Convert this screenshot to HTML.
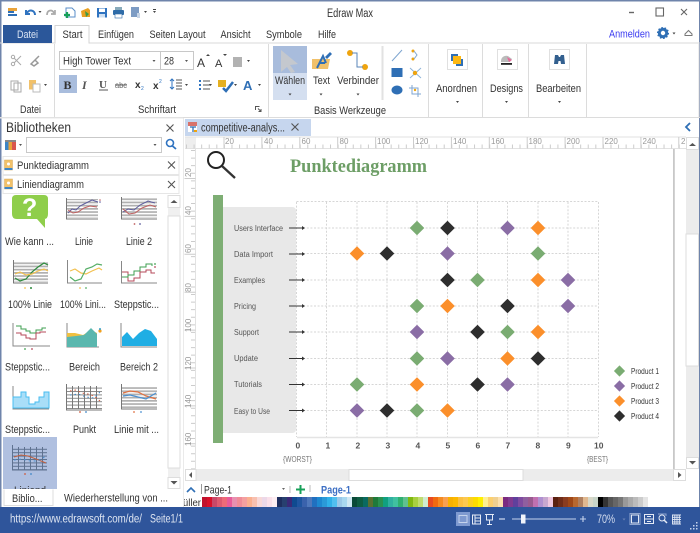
<!DOCTYPE html>
<html><head><meta charset="utf-8"><style>
html,body{margin:0;padding:0;background:#fff}
#w{position:relative;width:700px;height:533px;overflow:hidden;background:#fff}
svg{position:absolute;left:0;top:0}
text{font-family:"Liberation Sans",sans-serif;font-size:11px;fill:#333}
#pal{position:absolute;left:202px;top:497px;width:447px;height:10px;display:flex}
#pal i{flex:1;display:block}
</style></head><body><div id="w">
<svg width="700" height="533" viewBox="0 0 700 533">
<defs>
<path id="d" d="M0-7.3 7.3 0 0 7.3-7.3 0Z"/>
<path id="l" d="M0-5.6 5.6 0 0 5.6-5.6 0Z"/>
<pattern id="st" width="4" height="3.2" patternUnits="userSpaceOnUse"><rect width="4" height="1.7" fill="#b0b0b0"/></pattern>
<pattern id="gr" width="6" height="3.4" patternUnits="userSpaceOnUse"><rect width="6" height="1" fill="#8a8a8a"/><rect width="1" height="3.4" fill="#777"/></pattern>
<pattern id="gs" width="6" height="3.4" patternUnits="userSpaceOnUse"><rect width="6" height="1" fill="#5f7290"/><rect width="1" height="3.4" fill="#5f7290"/></pattern>
<path id="arr" d="M0 0 3 0 1.5 2Z"/>
<path id="x" d="M-3.5-3.5 3.5 3.5M3.5-3.5-3.5 3.5" stroke="#555" stroke-width="1.1" fill="none"/>
</defs>

<!-- window frame -->
<rect x=".5" y=".5" width="699" height="532" fill="#fff" stroke="#6f84ab"/>
<rect x="0" y="0" width="700" height="1.5" fill="#6f84ab"/>
<rect x="0" y="0" width="1.5" height="533" fill="#6f84ab"/>

<!-- quick access icons -->
<g>
<rect x="8" y="8" width="9" height="3" fill="#e9a33a"/><rect x="8" y="11" width="6" height="2" fill="#2f6fb5"/><rect x="8" y="14" width="9" height="2" fill="#2f6fb5"/>
<path d="M26 10v4h4M27 13c2-4 8-3 8 2" fill="none" stroke="#2f73c0" stroke-width="2"/>
<use href="#arr" x="38.5" y="11" fill="#444"/>
<path d="M55 10v4h-4M54 13c-2-4-7-3-7 2" fill="none" stroke="#aaa" stroke-width="1.7"/>
<path d="M66 8h6l3 3v6H66Z" fill="#fff" stroke="#5a8ec8"/><path d="M67 12v6M64 15h6" stroke="#17a05a" stroke-width="2.2"/>
<path d="M81 11l7-3 2 2 0 7-8 0Z" fill="#e9a020"/><path d="M85 11l4 3-3 3Z" fill="#3d9a46"/>
<rect x="97" y="8" width="10" height="9.5" fill="#2f73c0"/><rect x="99" y="8.5" width="6" height="3.5" fill="#fff"/><rect x="99" y="14" width="6" height="3.5" fill="#cfe0f2"/>
<rect x="115" y="7" width="7" height="3" fill="#8ab"/><rect x="113" y="10" width="11" height="5" rx="1" fill="#2f6ca8"/><rect x="115" y="14" width="7" height="4" fill="#fff" stroke="#2f6ca8" stroke-width=".6"/>
<rect x="131" y="7" width="8" height="10" fill="#7d9cc4"/><rect x="137" y="13" width="3" height="5" fill="#c6d4e6"/>
<use href="#arr" x="144" y="11" fill="#444"/>
<rect x="153" y="9" width="3" height="1" fill="#444"/><use href="#arr" x="153" y="11" fill="#444"/>
</g>
<text x="327" y="17" textLength="46" lengthAdjust="spacingAndGlyphs" style="font-size:11.5px">Edraw Max</text>
<path d="M629 12.5h5" stroke="#666" stroke-width="1.4"/>
<rect x="656" y="8" width="7.5" height="8" fill="none" stroke="#666" stroke-width="1.1"/>
<path d="M681 9 687 15M687 9 681 15" stroke="#666" stroke-width="1.1"/>

<!-- tabs -->
<path d="M0 43H700" stroke="#d8d8d8"/>
<rect x="3" y="25" width="49" height="18" fill="#2b579a"/>
<text x="17" y="38" textLength="21" lengthAdjust="spacingAndGlyphs" style="fill:#dbe5f4">Datei</text>
<path d="M55 43.5V25.5H89V43.5" fill="#fff" stroke="#d4d4d4"/><rect x="56" y="42" width="32" height="3" fill="#fff"/>
<text x="62.5" y="38" textLength="20" lengthAdjust="spacingAndGlyphs">Start</text>
<text x="98" y="38" textLength="36" lengthAdjust="spacingAndGlyphs">Einfügen</text>
<text x="149.5" y="38" textLength="56" lengthAdjust="spacingAndGlyphs">Seiten Layout</text>
<text x="220.5" y="38" textLength="30" lengthAdjust="spacingAndGlyphs">Ansicht</text>
<text x="266" y="38" textLength="36" lengthAdjust="spacingAndGlyphs">Symbole</text>
<text x="318" y="38" textLength="18" lengthAdjust="spacingAndGlyphs">Hilfe</text>
<text x="609" y="37.5" textLength="41" lengthAdjust="spacingAndGlyphs" style="fill:#3a3af0">Anmelden</text>
<circle cx="663" cy="33" r="3.7" fill="none" stroke="#2f6fb5" stroke-width="3"/>
<circle cx="663" cy="33" r="5.3" fill="none" stroke="#2f6fb5" stroke-width="1.5" stroke-dasharray="1.6 1.7"/>
<use href="#arr" x="672.5" y="32.5" fill="#444"/>
<path d="M685 34l3.5-3.5 3.5 3.500v1.500h-7Z" fill="none" stroke="#777" stroke-width="1"/>

<!-- ribbon -->
<path d="M0 117.5H700M54.5 44V117M268.5 44V117M428.5 44V117M482.5 44V117M528.500 44V117M586.5 44V117M699 44V117" stroke="#dcdcdc" fill="none"/>
<path d="M382.5 46V100" stroke="#e2e2e2" stroke-width="2"/>
<!-- clipboard -->
<g stroke="#aaa" fill="none" stroke-width="1">
<circle cx="13" cy="57" r="1.7"/><circle cx="13" cy="64" r="1.7"/><path d="M14 58 21 65M14 63 21 56"/>
<path d="M31 64 35 60 38 63 34 66ZM35 60 39 56" stroke="#999" stroke-width="1.5"/>
<rect x="11" y="81" width="7" height="9"/><rect x="14" y="83" width="7" height="9"/>
</g>
<rect x="29" y="80" width="7" height="9.5" fill="#f1c16a"/><rect x="33" y="84" width="7" height="8" fill="#fff" stroke="#bbb"/>
<use href="#arr" x="44" y="84" fill="#444"/>
<text x="20" y="113" textLength="21" lengthAdjust="spacingAndGlyphs">Datei</text>
<!-- font -->
<rect x="59.5" y="51.5" width="134" height="18" fill="#fff" stroke="#c8c8c8"/><path d="M160.5 51V70" stroke="#c8c8c8"/>
<text x="63" y="64.5" textLength="68" lengthAdjust="spacingAndGlyphs">High Tower Text</text>
<use href="#arr" x="152.5" y="60" fill="#555"/>
<text x="164" y="64.5" textLength="10" lengthAdjust="spacingAndGlyphs">28</text>
<use href="#arr" x="185" y="60" fill="#555"/>
<text x="197" y="67" style="font-size:12px">A</text><path d="M206 56l2-2 2 2Z" fill="#444"/>
<text x="215" y="67" style="font-size:11px">A</text><path d="M223 54h4l-2 2Z" fill="#444"/>
<path d="M233 58h9M233 60h9M233 62h9M233 64h9M233 66h9" stroke="#666"/><use href="#arr" x="247" y="60" fill="#444"/>
<rect x="59" y="75" width="18" height="18" fill="#a9bddd"/>
<text x="63.5" y="89" style="font-family:'Liberation Serif',serif;font-weight:bold;font-size:12px;fill:#333">B</text>
<text x="82" y="89" style="font-family:'Liberation Serif',serif;font-style:italic;font-weight:bold;font-size:12px;fill:#555">I</text>
<text x="99" y="88" style="font-family:'Liberation Serif',serif;font-weight:bold;font-size:11px;fill:#555">U</text><path d="M99 90h9" stroke="#555"/>
<text x="115" y="88" style="font-size:8.5px;fill:#666" textLength="12" lengthAdjust="spacingAndGlyphs">abc</text><path d="M115 85h12" stroke="#666"/>
<text x="135" y="88" style="font-weight:bold;font-size:10px">x</text><text x="141" y="90" style="font-size:5px;fill:#2f73c0">2</text>
<text x="153" y="89" style="font-weight:bold;font-size:10px">x</text><text x="159" y="83" style="font-size:5px;fill:#2f73c0">2</text>
<path d="M172 79v10M170 81l2-2 2 2M170 87l2 2 2-2" stroke="#2f73c0" fill="none"/><path d="M176 80h6M176 83h6M176 86h6M176 89h6" stroke="#555"/><use href="#arr" x="185" y="84" fill="#444"/>
<path d="M199 81h2M199 85h2M199 89h2" stroke="#2f73c0" stroke-width="2"/><path d="M203 81h7M203 85h7M203 89h7" stroke="#555"/><use href="#arr" x="209" y="84" fill="#444"/>
<rect x="218" y="80" width="8" height="7" fill="#e5b021"/><path d="M223 88l3 3 7-9" stroke="#2f6fb5" stroke-width="2.5" fill="none"/><use href="#arr" x="234" y="84" fill="#444"/>
<text x="243" y="90" style="font-size:13px;font-weight:bold;fill:#2f6fb5">A</text><use href="#arr" x="258" y="84" fill="#444"/>
<text x="138" y="113" textLength="38" lengthAdjust="spacingAndGlyphs">Schriftart</text>
<path d="M255.5 106.5h4M255.5 106v4M258 108.5l3 3M261 109v2.5h-2.5" stroke="#555" fill="none"/>
<!-- basis tools -->
<rect x="273" y="46" width="34" height="27" fill="#a8bcdc"/><rect x="273" y="73" width="34" height="27" fill="#d4dff0"/>
<path d="M281 50 298 64 290 65 295 72 291 73 287 67 281 72Z" fill="#c4c8ce"/>
<text x="275" y="84" textLength="30" lengthAdjust="spacingAndGlyphs">Wählen</text><use href="#arr" x="288.5" y="93.5" fill="#444"/>
<path d="M312 59h18l-2 10h-16Z" fill="#f1c16a"/><path d="M317 68l6-12 3 7M319 63h6" fill="none" stroke="#2f6fb5" stroke-width="2"/><path d="M325 57l5-5 2 2-5 5Z" fill="#2f6fb5"/>
<text x="313" y="84" textLength="17" lengthAdjust="spacingAndGlyphs">Text</text><use href="#arr" x="319.5" y="93.5" fill="#444"/>
<circle cx="350" cy="53" r="3" fill="#efa40e"/><circle cx="365" cy="67" r="3" fill="#efa40e"/><path d="M352 53h5v14h6" fill="none" stroke="#5a86b8" stroke-width="1"/>
<text x="337" y="84" textLength="42" lengthAdjust="spacingAndGlyphs">Verbinder</text><use href="#arr" x="356.5" y="93.5" fill="#444"/>
<text x="314" y="114" textLength="72" lengthAdjust="spacingAndGlyphs">Basis Werkzeuge</text>
<path d="M392 61 402 50" stroke="#7fa6d0"/>
<circle cx="413" cy="51" r="1.5" fill="#efa40e"/><circle cx="413" cy="59" r="1.5" fill="#efa40e"/><path d="M414 51 417 55 414 59" stroke="#7fa6d0" fill="none"/>
<rect x="391.5" y="68" width="11" height="9" fill="#2f6fb5"/>
<path d="M410 68 421 78M421 68 410 78" stroke="#8fb4d8"/><circle cx="415" cy="73" r="2.2" fill="#efa40e"/>
<ellipse cx="397" cy="90" rx="5.5" ry="4.5" fill="#2f6fb5"/>
<path d="M412 85v9h9M409 88h9v9" fill="none" stroke="#7fa6d0"/><circle cx="415" cy="90" r="1.2" fill="#efa40e"/>
<!-- right groups -->
<rect x="447.5" y="49.5" width="20" height="20" fill="#fff" stroke="#e0e0e0"/>
<rect x="451" y="54" width="7" height="7" fill="#2f6fb5"/><rect x="456" y="59" width="7" height="7" fill="#2f6fb5"/><rect x="453" y="56" width="8" height="8" fill="#fdb813"/>
<text x="436" y="92" textLength="41" lengthAdjust="spacingAndGlyphs">Anordnen</text><use href="#arr" x="456" y="101" fill="#444"/>
<rect x="497.5" y="49.5" width="20" height="20" fill="#fff" stroke="#e0e0e0"/>
<path d="M501 61c0-4 4-6 7-5l4 3-2 3h-9Z" fill="#bbb"/><path d="M507 57l5 3-3 2Z" fill="#e9679a"/><rect x="501" y="63" width="11" height="1.8" fill="#222"/>
<text x="490" y="92" textLength="33" lengthAdjust="spacingAndGlyphs">Designs</text><use href="#arr" x="505" y="101" fill="#444"/>
<rect x="549.5" y="49.5" width="20" height="20" fill="#fff" stroke="#e0e0e0"/>
<path d="M554 64l1-9h3l1 2h1l1-2h3l1 9h-4l-.5-3h-2l-.5 3Z" fill="#33608f"/>
<text x="536" y="92" textLength="45" lengthAdjust="spacingAndGlyphs">Bearbeiten</text><use href="#arr" x="558" y="101" fill="#444"/>

<!-- document tab bar -->
<rect x="185" y="119" width="126" height="17" fill="#c6d6ee"/>
<rect x="188" y="122" width="9" height="4" fill="#d9726a"/><rect x="188" y="126" width="9" height="6" fill="#fff"/><path d="M190 127h6M193 127v5" stroke="#2f6fb5" stroke-width="1.3"/><rect x="194" y="130" width="3" height="2" fill="#efa40e"/>
<text x="201" y="131.5" textLength="84" lengthAdjust="spacingAndGlyphs" style="font-size:11.5px">competitive-analys...</text>
<use href="#x" x="295" y="127"/>
<path d="M690 123 686 127 690 131" fill="none" stroke="#2f6fb5" stroke-width="1.8"/>

<!-- top ruler -->
<rect x="185" y="137" width="11" height="12" fill="#eee"/>
<path d="M185 137H686M185 148.5H686" stroke="#e2e2e2"/>
<path d="M186 146.5H685" stroke="#ccc" stroke-width="4" stroke-dasharray="1 6.58"/>
<path d="M223.5 142.5H685" stroke="#ccc" stroke-width="11" stroke-dasharray="1 36.9"/>
<text x="225" y="144" style="font-size:8px;fill:#999">20</text><text x="264" y="144" style="font-size:8px;fill:#999">40</text><text x="301.500" y="144" style="font-size:8px;fill:#999">60</text><text x="339.500" y="144" style="font-size:8px;fill:#999">80</text><text x="377" y="144" style="font-size:8px;fill:#999">100</text><text x="415" y="144" style="font-size:8px;fill:#999">120</text><text x="453" y="144" style="font-size:8px;fill:#999">140</text><text x="491" y="144" style="font-size:8px;fill:#999">160</text><text x="528.500" y="144" style="font-size:8px;fill:#999">180</text><text x="566.500" y="144" style="font-size:8px;fill:#999">200</text><text x="604.500" y="144" style="font-size:8px;fill:#999">220</text><text x="642.500" y="144" style="font-size:8px;fill:#999">240</text><text x="681" y="144" style="font-size:8px;fill:#999">2</text>

<!-- left ruler -->
<path d="M195.5 149V469" stroke="#e2e2e2"/>
<path d="M193 150V469" stroke="#ccc" stroke-width="4" stroke-dasharray="1 6.58"/>
<path d="M190 178V469" stroke="#ccc" stroke-width="11" stroke-dasharray="1 36.9"/>
<text transform="translate(191 177) rotate(-90)" style="font-size:8px;fill:#999">20</text>
<text transform="translate(191 215) rotate(-90)" style="font-size:8px;fill:#999">40</text>
<text transform="translate(191 253) rotate(-90)" style="font-size:8px;fill:#999">60</text>
<text transform="translate(191 292) rotate(-90)" style="font-size:8px;fill:#999">80</text>
<text transform="translate(191 332) rotate(-90)" style="font-size:8px;fill:#999">100</text>
<text transform="translate(191 370) rotate(-90)" style="font-size:8px;fill:#999">120</text>
<text transform="translate(191 408) rotate(-90)" style="font-size:8px;fill:#999">140</text>
<text transform="translate(191 446) rotate(-90)" style="font-size:8px;fill:#999">160</text>

<!-- page edge -->
<rect x="673" y="149" width="1.8" height="320" fill="#c8c8c8"/>

<!-- canvas content -->
<circle cx="216" cy="160" r="8" fill="none" stroke="#222" stroke-width="2"/>
<path d="M222 166 235 178" stroke="#333" stroke-width="2.3"/>
<text x="290" y="172" textLength="137" lengthAdjust="spacingAndGlyphs" style="font-family:'Liberation Serif',serif;font-weight:bold;font-size:19px;fill:#6d9e66">Punktediagramm</text>
<rect x="213" y="195" width="10" height="248" fill="#7eae74"/>
<path d="M223 207H292q4 0 4 4V429q0 4-4 4H223Z" fill="#e8e8e8"/>
<text x="234" y="231" textLength="49" lengthAdjust="spacingAndGlyphs" style="font-size:8px;fill:#555">Users Interface</text>
<text x="234" y="257" textLength="39" lengthAdjust="spacingAndGlyphs" style="font-size:8px;fill:#555">Data Import</text>
<text x="234" y="283" textLength="31" lengthAdjust="spacingAndGlyphs" style="font-size:8px;fill:#555">Examples</text>
<text x="234" y="309" textLength="22" lengthAdjust="spacingAndGlyphs" style="font-size:8px;fill:#555">Pricing</text>
<text x="234" y="335" textLength="25" lengthAdjust="spacingAndGlyphs" style="font-size:8px;fill:#555">Support</text>
<text x="234" y="361" textLength="24" lengthAdjust="spacingAndGlyphs" style="font-size:8px;fill:#555">Update</text>
<text x="234" y="387" textLength="28" lengthAdjust="spacingAndGlyphs" style="font-size:8px;fill:#555">Tutorials</text>
<text x="234" y="414" textLength="36" lengthAdjust="spacingAndGlyphs" style="font-size:8px;fill:#555">Easy to Use</text>
<!-- grid -->
<g stroke="#d6d6d6" stroke-dasharray="2 1.6" fill="none">
<path d="M296.5 201.5H598.5M296 228H598M296 253.5H598M296 280H598M296 306H598M296 332H598M296 358.5H598M296 384.5H598M296 410.5H598"/>
<path d="M326.500 202V437M357 202V437M387 202V437M417 202V437M447.5 202V437M477.5 202V437M507.5 202V437M538 202V437M568 202V437M598.5 202V437M296.5 202V437"/>
</g>
<path d="M297 437.5H598" stroke="#e4e4e4" stroke-width="1.5"/>
<!-- arrows -->
<path d="M289 228H303M289 254H303M289 280H303M289 306H303M289 332H303M289 358.5H303M289 384.5H303M289 410.5H303" stroke="#333" stroke-width="1"/>
<path fill="#333" d="M302 226 305 228 302 230ZM302 252 305 254 302 256ZM302 278 305 280 302 282ZM302 304 305 306 302 308ZM302 330 305 332 302 334ZM302 356.5 305 358.5 302 360.5ZM302 382.5 305 384.5 302 386.5ZM302 408.5 305 410.5 302 412.5Z"/>
<!-- diamonds -->
<g fill="#7aac72">
<use href="#d" x="417" y="228"/><use href="#d" x="538" y="253.5"/><use href="#d" x="477.5" y="280"/><use href="#d" x="417" y="306"/><use href="#d" x="507.5" y="332"/><use href="#d" x="417" y="358.5"/><use href="#d" x="357" y="384.5"/><use href="#d" x="417" y="410.5"/>
<use href="#l" x="619.5" y="371"/>
</g>
<g fill="#8a6da5">
<use href="#d" x="507.5" y="228"/><use href="#d" x="447.5" y="253.5"/><use href="#d" x="568" y="280"/><use href="#d" x="568" y="306"/><use href="#d" x="417" y="332"/><use href="#d" x="447.5" y="358.5"/><use href="#d" x="507.5" y="384.5"/><use href="#d" x="357" y="410.5"/>
<use href="#l" x="619.5" y="386"/>
</g>
<g fill="#fb8f2b">
<use href="#d" x="538" y="228"/><use href="#d" x="357" y="253.5"/><use href="#d" x="538" y="280"/><use href="#d" x="447.5" y="306"/><use href="#d" x="538" y="332"/><use href="#d" x="507.5" y="358.5"/><use href="#d" x="417" y="384.5"/><use href="#d" x="447.5" y="410.5"/>
<use href="#l" x="619.5" y="401"/>
</g>
<g fill="#2e2e2e">
<use href="#d" x="447.5" y="228"/><use href="#d" x="387" y="253.5"/><use href="#d" x="447.5" y="280"/><use href="#d" x="507.5" y="306"/><use href="#d" x="477.5" y="332"/><use href="#d" x="538" y="358.5"/><use href="#d" x="477.5" y="384.5"/><use href="#d" x="387" y="410.5"/>
<use href="#l" x="619.5" y="416"/>
</g>
<text x="631" y="374" textLength="28" lengthAdjust="spacingAndGlyphs" style="font-size:8px">Product 1</text>
<text x="631" y="389" textLength="28" lengthAdjust="spacingAndGlyphs" style="font-size:8px">Product 2</text>
<text x="631" y="404" textLength="28" lengthAdjust="spacingAndGlyphs" style="font-size:8px">Product 3</text>
<text x="631" y="419" textLength="28" lengthAdjust="spacingAndGlyphs" style="font-size:8px">Product 4</text>
<!-- axis -->
<text x="295.5" y="448.5" style="font-size:8.5px;font-weight:bold;fill:#555">0</text>
<text x="325.5" y="448.5" style="font-size:8.5px;font-weight:bold;fill:#555">1</text>
<text x="355.5" y="448.5" style="font-size:8.5px;font-weight:bold;fill:#555">2</text>
<text x="385.5" y="448.5" style="font-size:8.5px;font-weight:bold;fill:#555">3</text>
<text x="415.5" y="448.5" style="font-size:8.5px;font-weight:bold;fill:#555">4</text>
<text x="445.5" y="448.5" style="font-size:8.5px;font-weight:bold;fill:#555">5</text>
<text x="475.5" y="448.5" style="font-size:8.5px;font-weight:bold;fill:#555">6</text>
<text x="505.5" y="448.5" style="font-size:8.5px;font-weight:bold;fill:#555">7</text>
<text x="535.5" y="448.5" style="font-size:8.5px;font-weight:bold;fill:#555">8</text>
<text x="566" y="448.5" style="font-size:8.5px;font-weight:bold;fill:#555">9</text>
<text x="594" y="448.5" style="font-size:8.5px;font-weight:bold;fill:#555">10</text>
<text x="283" y="462" textLength="29" lengthAdjust="spacingAndGlyphs" style="font-size:8px;fill:#777">{WORST}</text>
<text x="587" y="462" textLength="21" lengthAdjust="spacingAndGlyphs" style="font-size:8px;fill:#777">{BEST}</text>

<!-- right scrollbar -->
<rect x="686" y="137" width="13" height="332" fill="#ececec"/>
<rect x="686.5" y="137.5" width="12" height="12" fill="#fff" stroke="#ddd"/><path d="M689 146l3.5-3 3.5 3Z" fill="#555"/>
<rect x="686" y="234" width="12.5" height="132" fill="#fff" stroke="#ddd"/>
<rect x="686.5" y="457.5" width="12" height="11" fill="#fff" stroke="#ddd"/><path d="M689 461h7l-3.5 3.5Z" fill="#555"/>
<!-- bottom scrollbar -->
<rect x="185" y="469" width="501" height="12" fill="#ececec"/>
<rect x="185.5" y="469.5" width="10.5" height="11" fill="#fff" stroke="#ddd"/><path d="M192 472v6l-3-3Z" fill="#555"/>
<rect x="349" y="469.5" width="174" height="11" fill="#fff" stroke="#ddd"/>
<rect x="673.5" y="469.5" width="12" height="11" fill="#fff" stroke="#ddd"/><path d="M678 472v6l3.5-3Z" fill="#555"/>

<!-- page row -->
<path d="M187 492 191 488 195 492" fill="none" stroke="#2f6fb5" stroke-width="1.6"/>
<path d="M201.5 484V494" stroke="#999"/>
<text x="204" y="493.5" textLength="28" lengthAdjust="spacingAndGlyphs" style="font-size:11px">Page-1</text>
<use href="#arr" x="282" y="488" fill="#666"/>
<path d="M290 486V493M310 485V492" stroke="#bbb"/>
<path d="M296 489.5H305M300.5 485V494" stroke="#18a05a" stroke-width="2"/>
<text x="321" y="493.5" textLength="30" lengthAdjust="spacingAndGlyphs" style="font-size:11px;font-weight:bold;fill:#3d6fc4">Page-1</text>
<text x="177" y="506" textLength="24" lengthAdjust="spacingAndGlyphs" style="font-size:10.5px">Füller</text>

<!-- left panel -->
<rect x="1.5" y="118" width="181" height="389" fill="#fff"/>
<path d="M0 118H183" stroke="#e8e8e8"/>
<path d="M183.5 118V507" stroke="#eaeaea"/>
<text x="6" y="132" textLength="65" lengthAdjust="spacingAndGlyphs" style="font-size:13.5px">Bibliotheken</text>
<use href="#x" x="170" y="128"/>
<rect x="5" y="141" width="11" height="9" fill="#e9a33a"/><rect x="5" y="141" width="3.5" height="9" fill="#3d85c6"/><rect x="12" y="141" width="4" height="9" fill="#d9564e"/><rect x="5" y="140" width="11" height="2" fill="#888"/>
<use href="#arr" x="19" y="144" fill="#555"/>
<rect x="26.5" y="137.5" width="135" height="15" fill="#fff" stroke="#c9c9c9"/>
<use href="#arr" x="153.5" y="144" fill="#555"/>
<circle cx="170" cy="143" r="3.5" fill="none" stroke="#2f73c0" stroke-width="1.6"/><path d="M172.5 146 176 149" stroke="#2f73c0" stroke-width="1.8"/>
<rect x="3" y="156.5" width="176" height="18" fill="#fff" stroke="#e6e6e6"/>
<rect x="3" y="175.5" width="176" height="18" fill="#fff" stroke="#e6e6e6"/>
<rect x="4.5" y="160" width="8" height="10" fill="#f1c16a" stroke="#d7a95a" stroke-width=".5"/><rect x="4.5" y="168" width="8" height="2" fill="#3d85c6"/><circle cx="8.500" cy="164" r="1.5" fill="#fff"/>
<rect x="4.5" y="179" width="8" height="10" fill="#f1c16a" stroke="#d7a95a" stroke-width=".5"/><rect x="4.5" y="187" width="8" height="2" fill="#3d85c6"/><circle cx="8.500" cy="183" r="1.5" fill="#fff"/>
<text x="17" y="169" textLength="72" lengthAdjust="spacingAndGlyphs">Punktediagramm</text>
<text x="17" y="188" textLength="67" lengthAdjust="spacingAndGlyphs">Liniendiagramm</text>
<use href="#x" x="171.5" y="165"/><use href="#x" x="171.5" y="184.5"/>

<!-- library scrollbar -->
<rect x="168" y="195" width="12" height="294" fill="#f0f0f0"/>
<rect x="168" y="195.5" width="12" height="12" fill="#fff" stroke="#ddd"/><path d="M170.5 203l3.5-3 3.5 3Z" fill="#555"/>
<rect x="168" y="216" width="12" height="252" fill="#fff" stroke="#ddd"/>
<rect x="168" y="477.5" width="12" height="11" fill="#fff" stroke="#ddd"/><path d="M170.5 481h7l-3.5 3.5Z" fill="#555"/>

<!-- thumbnails -->
<path d="M16 195H44Q48 195 48 199V214Q48 219 44 219H45V228L37 219H17Q12 219 12 214V199Q12 195 16 195Z" fill="#8fce4b"/>
<text x="22" y="216" style="font-size:25px;font-weight:bold;fill:#fff">?</text>

<g>
<rect x="67" y="199" width="31" height="19" fill="url(#st)"/><path d="M66.5 198V219H98" fill="none" stroke="#777"/>
<path d="M68 213 72 209 76 210 80 206 86 203 92 200 98 202" fill="none" stroke="#5c5c9c"/><path d="M68 210 73 213 78 212 84 208 90 206 97 207" fill="none" stroke="#c06060"/>
<circle cx="100" cy="200" r=".8" fill="#c06060"/><circle cx="100" cy="202" r=".8" fill="#5c5c9c"/>
</g>
<g>
<rect x="122" y="198" width="35" height="20" fill="url(#st)"/><path d="M121.5 197V219H157" fill="none" stroke="#777"/>
<path d="M123 212 128 209 134 210 140 205 148 201 155 203" fill="none" stroke="#5c5c9c"/><path d="M123 209 129 214 135 213 142 208 150 205 156 207" fill="none" stroke="#c06060"/>
<circle cx="134.5" cy="224" r=".9" fill="#c06060"/><circle cx="140" cy="224" r=".9" fill="#5c5c9c"/>
</g>
<g>
<rect x="14" y="261" width="34" height="21" fill="url(#st)"/><path d="M13.5 260V283H48" fill="none" stroke="#777"/>
<path d="M15 278 20 281 26 279 32 272 38 267 44 263 48 265" fill="none" stroke="#2c8a3c" stroke-width="1.2"/><path d="M15 274 20 272 26 275 32 274 38 271 44 269 48 271" fill="none" stroke="#f2c04f" stroke-width="1.2"/>
<circle cx="25" cy="288" r=".9" fill="#f2c04f"/><circle cx="31" cy="288" r="1" fill="#2c8a3c"/>
</g>
<g>
<path d="M67.5 260V283H102" fill="none" stroke="#888"/>
<path d="M70 271 75 269 81 273 86 274 92 271 99 268 102 270" fill="none" stroke="#f2c04f" stroke-width="1.2"/><path d="M70 277 75 281 81 279 86 269 92 267 97 264 102 265" fill="none" stroke="#55ae66" stroke-width="1.2"/>
<circle cx="80" cy="288" r=".9" fill="#f2c04f"/><circle cx="86" cy="288" r=".9" fill="#55ae66"/>
</g>
<g>
<path d="M121.5 261V283H157" fill="none" stroke="#888"/>
<path d="M122 272H128V281H134V278H140V272H146V270H151V273H155" fill="none" stroke="#b5485a"/><path d="M122 277H128V275H134V271H140V267H146V264H152V266" fill="none" stroke="#3f9f50"/>
<circle cx="155" cy="264" r=".9" fill="#3f9f50"/><circle cx="155" cy="267" r=".9" fill="#b5485a"/>
</g>
<g>
<path d="M13 323V346H50" fill="none" stroke="#888"/>
<path d="M16 326H21V329H26V331H30V333H36V330H42V328H46" fill="none" stroke="#3f9f50"/><path d="M16 333H21V335H26V338H30V339H36V333H40V332H46" fill="none" stroke="#b5485a"/>
<circle cx="25" cy="349" r=".9" fill="#3f9f50"/><circle cx="32" cy="349" r=".9" fill="#b5485a"/>
</g>
<g>
<path d="M67 323V347H99" fill="none" stroke="#888"/>
<path d="M67 333 75 333 83 335 91 330 97 333V347H67Z" fill="#f0c040"/><path d="M67 337 76 336 84 335 91 328 97 334V347H67Z" fill="#5ab7ae"/>
<circle cx="100" cy="331" r="1.6" fill="#f0a020"/><circle cx="100" cy="329" r="1" fill="#30a0d0"/>
</g>
<g>
<path d="M121 323V347H157" fill="none" stroke="#888"/>
<path d="M122 346V337L127 332 133 339 139 333 145 329 151 331 157 339V346Z" fill="#20aee4"/>
</g>
<g>
<path d="M13 386V409H49" fill="none" stroke="#888"/>
<path d="M13 408V397H21V392H26V397H29V404H35V402H39V397H44V392H49V408Z" fill="#a9def8" stroke="#49bdf0"/>
</g>
<g>
<rect x="67" y="386" width="35" height="23" fill="url(#gr)"/><path d="M66.5 384V410H102" fill="none" stroke="#777"/>
<path d="M70 391 76 390 82 393 88 394 94 396 100 401" fill="none" stroke="#d0583a" stroke-dasharray="1.5 3"/><path d="M70 395 78 394 86 397 94 398 100 392" fill="none" stroke="#3d85c6" stroke-dasharray="1.5 3"/>
<circle cx="80" cy="412" r=".9" fill="#d0583a"/><circle cx="86" cy="412" r=".9" fill="#3d85c6"/>
</g>
<g>
<rect x="122" y="386" width="35" height="22" fill="url(#st)"/><path d="M121.5 384V409H157" fill="none" stroke="#777"/>
<path d="M123 393 130 391 138 392 146 396 156 399" fill="none" stroke="#e07040" stroke-width="1.2"/><path d="M123 396 130 395 138 397 146 399 156 393" fill="none" stroke="#4a8fd0" stroke-width="1.2"/>
<circle cx="134" cy="412" r=".9" fill="#e07040"/><circle cx="141" cy="412" r=".9" fill="#4a8fd0"/>
</g>

<!-- selected -->
<rect x="3" y="437" width="54" height="52" fill="#b0c0e0"/>
<rect x="13" y="447" width="34" height="23" fill="url(#gs)"/><path d="M12.5 445V470H47" fill="none" stroke="#5f7290"/>
<path d="M14 457 21 455 28 456 36 459 46 463" fill="none" stroke="#c0603f"/><path d="M14 460 22 459 30 461 38 461 46 456" fill="none" stroke="#4a8fd0" stroke-dasharray="2 3"/>
<circle cx="25" cy="474" r=".9" fill="#d0583a"/><circle cx="31" cy="474" r=".9" fill="#3d85c6"/>
<text x="14" y="494" textLength="32" lengthAdjust="spacingAndGlyphs">Liniend</text>

<!-- bottom tabs -->
<rect x="1.5" y="489" width="181" height="18" fill="#fff"/>
<path d="M4 489.5V505.5H53V489.5" fill="#fff" stroke="#dcdcdc"/>
<text x="12" y="502" textLength="30.5" lengthAdjust="spacingAndGlyphs">Biblio...</text>
<text x="64" y="501.5" textLength="104" lengthAdjust="spacingAndGlyphs">Wiederherstellung von ...</text>

<!-- labels -->
<text x="5" y="245" textLength="49" lengthAdjust="spacingAndGlyphs">Wie kann ...</text>
<text x="75" y="245" textLength="18" lengthAdjust="spacingAndGlyphs">Linie</text>
<text x="126" y="245" textLength="26" lengthAdjust="spacingAndGlyphs">Linie 2</text>
<text x="8" y="308" textLength="44" lengthAdjust="spacingAndGlyphs">100% Linie</text>
<text x="60" y="308" textLength="46" lengthAdjust="spacingAndGlyphs">100% Lini...</text>
<text x="114" y="308" textLength="45" lengthAdjust="spacingAndGlyphs">Steppstic...</text>
<text x="5" y="370.5" textLength="45" lengthAdjust="spacingAndGlyphs">Steppstic...</text>
<text x="69" y="370.5" textLength="31" lengthAdjust="spacingAndGlyphs">Bereich</text>
<text x="120" y="370.5" textLength="38" lengthAdjust="spacingAndGlyphs">Bereich 2</text>
<text x="5" y="433" textLength="45" lengthAdjust="spacingAndGlyphs">Steppstic...</text>
<text x="73" y="433" textLength="23" lengthAdjust="spacingAndGlyphs">Punkt</text>
<text x="114" y="433" textLength="45" lengthAdjust="spacingAndGlyphs">Linie mit ...</text>

<!-- status bar -->
<rect x="0" y="507" width="700" height="26" fill="#2f559b"/>
<text x="10" y="522.5" textLength="132" lengthAdjust="spacingAndGlyphs" style="font-size:11.5px;fill:#dfe6f2">https://www.edrawsoft.com/de/</text>
<text x="150" y="522.5" textLength="33" lengthAdjust="spacingAndGlyphs" style="font-size:11.5px;fill:#dfe6f2">Seite1/1</text>
<rect x="456" y="512" width="14" height="14" fill="#7f9ad0"/>
<rect x="459" y="515.5" width="8" height="7" fill="none" stroke="#c5d3ec"/>
<rect x="472.5" y="515" width="8" height="9" fill="none" stroke="#e4eaf6"/><path d="M475 515V524M475 518H480M475 521H480" stroke="#e4eaf6"/>
<path d="M485 514.5H494M486.5 514.5V520H492.5V514.5M489.5 520V524M487 524.5H492" fill="none" stroke="#e4eaf6"/>
<path d="M499 519H505" stroke="#c5d3ec" stroke-width="1.3"/>
<path d="M512 519H576" stroke="#c5d3ec"/>
<rect x="521" y="514.5" width="4.5" height="9" fill="#f1f4fa"/>
<path d="M580 519H586M583 516V522" stroke="#c5d3ec" stroke-width="1.1"/>
<text x="597" y="523" textLength="18" lengthAdjust="spacingAndGlyphs" style="font-size:11.5px;fill:#d5def0">70%</text>
<use href="#arr" x="622.5" y="518.5" fill="#6a82b5"/>
<rect x="631.5" y="515" width="7" height="8" fill="none" stroke="#e4eaf6"/><rect x="630" y="513.5" width="10" height="11" fill="none" stroke="#8fa5cf"/>
<rect x="644.5" y="514.5" width="9" height="9" fill="none" stroke="#e4eaf6"/><path d="M644.5 519H653.5M647 516.5H651M647 521.5H651" stroke="#e4eaf6"/>
<circle cx="662" cy="518" r="3" fill="none" stroke="#e4eaf6"/><path d="M664 520 667 523" stroke="#e4eaf6" stroke-width="1.5"/><path d="M658 514h8v2" stroke="#8fa5cf" fill="none"/>
<path d="M672 515H681M672 517.3H681M672 519.6H681M672 521.9H681M672 524H681M672.5 514.5V524.5M674.8 514.5V524.5M677 514.5V524.5M679.3 514.5V524.5" stroke="#e4eaf6" stroke-width=".9"/>
<path d="M696 522h1.5v1.5H696ZM693 525h1.5v1.5H693ZM696 525h1.5v1.5H696ZM690 528h1.5v1.5H690ZM693 528h1.5v1.5H693ZM696 528h1.5v1.5H696Z" fill="#c5d3ec"/>
</svg>
<div id="pal">
<i style="background:#c0122d"></i><i style="background:#d8102a"></i><i style="background:#c94868"></i><i style="background:#de5a70"></i><i style="background:#ee6b78"></i><i style="background:#e85c9a"></i><i style="background:#e890b0"></i><i style="background:#f08c98"></i><i style="background:#f4a0a0"></i><i style="background:#fab090"></i><i style="background:#f8c0b0"></i><i style="background:#f8d8d8"></i><i style="background:#ecd8e8"></i><i style="background:#fae0ea"></i><i style="background:#fdeef2"></i>
<i style="background:#1f2f5f"></i><i style="background:#27406f"></i><i style="background:#3a2a78"></i><i style="background:#0f4a90"></i><i style="background:#1f55a0"></i><i style="background:#3a62ac"></i><i style="background:#5078bb"></i><i style="background:#2070c0"></i><i style="background:#1e88d0"></i><i style="background:#2a9ad8"></i><i style="background:#30b0e8"></i><i style="background:#50c0f0"></i><i style="background:#9ac8e8"></i><i style="background:#a8d8f0"></i><i style="background:#d0e8f4"></i>
<i style="background:#0a4a38"></i><i style="background:#0e5c42"></i><i style="background:#0a6a60"></i><i style="background:#5a7030"></i><i style="background:#1f7a3a"></i><i style="background:#2a9050"></i><i style="background:#10a080"></i><i style="background:#30b0a0"></i><i style="background:#40c0a0"></i><i style="background:#30b070"></i><i style="background:#60c090"></i><i style="background:#80b810"></i><i style="background:#a8d040"></i><i style="background:#c0dc70"></i><i style="background:#d0ecd0"></i>
<i style="background:#e84a20"></i><i style="background:#f06a10"></i><i style="background:#f58a20"></i><i style="background:#f8a050"></i><i style="background:#f8b000"></i><i style="background:#fcb800"></i><i style="background:#fcc040"></i><i style="background:#fcc850"></i><i style="background:#fcd020"></i><i style="background:#fcdc00"></i><i style="background:#fff000"></i><i style="background:#fff090"></i><i style="background:#fcd070"></i><i style="background:#f0d090"></i><i style="background:#fce0b0"></i>
<i style="background:#7a2a80"></i><i style="background:#803a90"></i><i style="background:#60409c"></i><i style="background:#7f4ba0"></i><i style="background:#8f5f9f"></i><i style="background:#9a5a90"></i><i style="background:#c070b0"></i><i style="background:#b090d0"></i><i style="background:#c8a8d0"></i><i style="background:#f0c8e0"></i>
<i style="background:#5a2010"></i><i style="background:#702c18"></i><i style="background:#8a3c20"></i><i style="background:#a04818"></i><i style="background:#b86830"></i><i style="background:#b08060"></i><i style="background:#e0b890"></i><i style="background:#d8d8c8"></i><i style="background:#c8d4c8"></i>
<i style="background:#000"></i><i style="background:#333"></i><i style="background:#555"></i><i style="background:#666"></i><i style="background:#777"></i><i style="background:#999"></i><i style="background:#aaa"></i><i style="background:#bbb"></i><i style="background:#ccc"></i><i style="background:#e4e4e4"></i>
</div>
</div></body></html>
